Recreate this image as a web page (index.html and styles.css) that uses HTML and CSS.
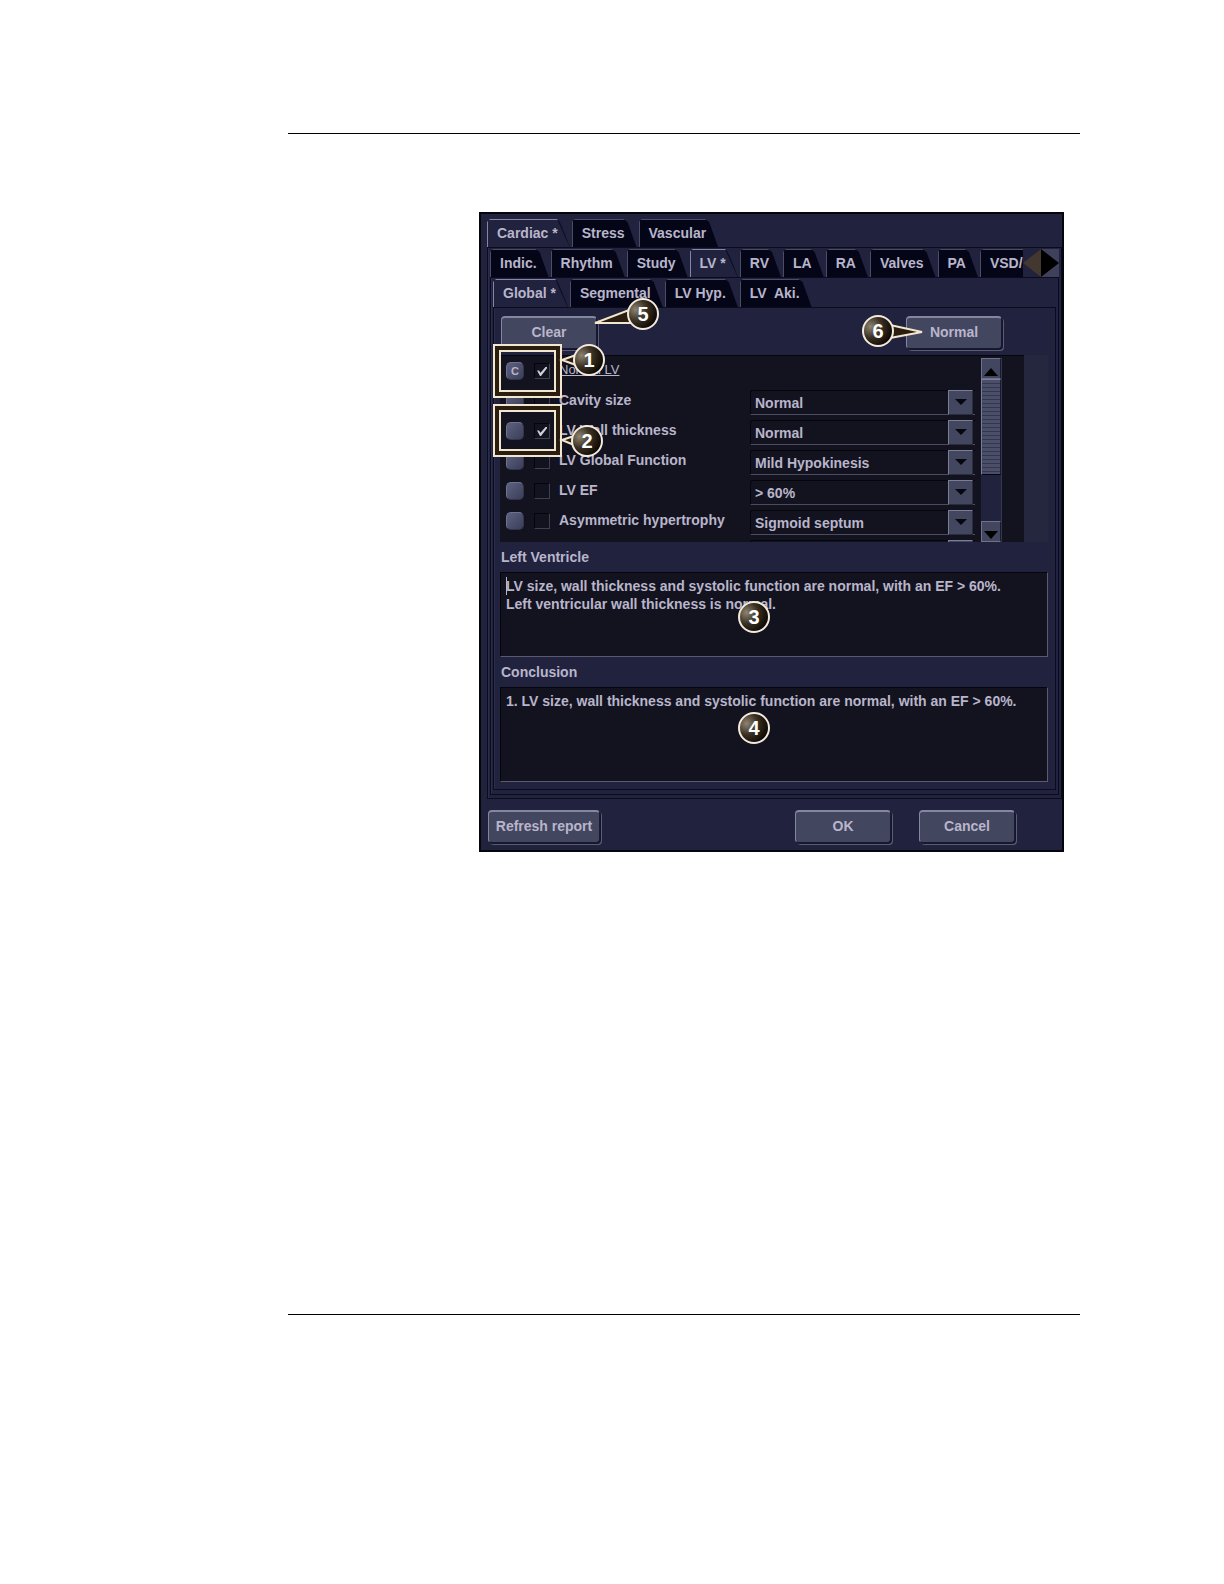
FILE: index.html
```
<!DOCTYPE html>
<html lang="en">
<head>
    <meta charset="UTF-8">
    <meta name="viewport" content="width=device-width, initial-scale=1.0">
    <title>Report Comments - LV Global</title>
    <link rel="stylesheet" href="styles.css">
</head>
<body>
    <main class="page">
        <figure class="figure">
            <div class="dialog">
                <nav class="tabs">
                    <button class="tab active">Cardiac *</button>
                    <button class="tab">Stress</button>
                    <button class="tab">Vascular</button>
                </nav>
                <div class="frame outer">
                    <div class="tab-bar">
                        <nav class="tabs">
                            <button class="tab">Indic.</button>
                            <button class="tab">Rhythm</button>
                            <button class="tab">Study</button>
                            <button class="tab active">LV *</button>
                            <button class="tab">RV</button>
                            <button class="tab">LA</button>
                            <button class="tab">RA</button>
                            <button class="tab">Valves</button>
                            <button class="tab">PA</button>
                            <button class="tab">VSD/ASD</button>
                        </nav>
                        <button class="tab-scroll prev" aria-label="Previous tabs"></button>
                        <button class="tab-scroll next" aria-label="Next tabs"></button>
                    </div>
                    <div class="frame middle">
                        <nav class="tabs">
                            <button class="tab active">Global *</button>
                            <button class="tab">Segmental</button>
                            <button class="tab">LV Hyp.</button>
                            <button class="tab">LV  Aki.</button>
                        </nav>
                        <div class="frame inner">
                            <div class="toolbar">
                                <button class="btn">Clear</button>
                                <button class="btn">Normal</button>
                            </div>

                            <div class="list-wrap">
                                <div class="list">
                                    <div class="rows">
                                        <div class="row">
                                            <button class="code">C</button>
                                            <input type="checkbox" aria-label="Normal LV" checked>
                                            <a href="#">Normal LV</a>
                                        </div>
                                        <div class="row">
                                            <button class="code" aria-label="Code"></button>
                                            <input type="checkbox" id="cavity">
                                            <label for="cavity">Cavity size</label>
                                            <div class="combo"><select aria-label="Cavity size"><option>Normal</option></select></div>
                                        </div>
                                        <div class="row">
                                            <button class="code" aria-label="Code"></button>
                                            <input type="checkbox" id="wall" checked>
                                            <label for="wall">LV Wall thickness</label>
                                            <div class="combo"><select aria-label="LV Wall thickness"><option>Normal</option></select></div>
                                        </div>
                                        <div class="row">
                                            <button class="code" aria-label="Code"></button>
                                            <input type="checkbox" id="function">
                                            <label for="function">LV Global Function</label>
                                            <div class="combo"><select aria-label="LV Global Function"><option>Mild Hypokinesis</option></select></div>
                                        </div>
                                        <div class="row">
                                            <button class="code" aria-label="Code"></button>
                                            <input type="checkbox" id="ef">
                                            <label for="ef">LV EF</label>
                                            <div class="combo"><select aria-label="LV EF"><option>&gt; 60%</option></select></div>
                                        </div>
                                        <div class="row">
                                            <button class="code" aria-label="Code"></button>
                                            <input type="checkbox" id="asym">
                                            <label for="asym">Asymmetric hypertrophy</label>
                                            <div class="combo"><select aria-label="Asymmetric hypertrophy"><option>Sigmoid septum</option></select></div>
                                        </div>
                                        <!-- next row, only its top edge shows -->
                                        <div class="row">
                                            <span></span>
                                            <span></span>
                                            <span></span>
                                            <div class="combo"><select aria-label="More"></select></div>
                                        </div>
                                    </div>
                                    <div class="scrollbar">
                                        <button class="arrow up" aria-label="Scroll up"></button>
                                        <div class="thumb"></div>
                                        <button class="arrow down" aria-label="Scroll down"></button>
                                    </div>
                                </div>
                            </div>

                            <label class="caption" for="ventricle">Left Ventricle</label>
                            <div class="text-wrap">
                                <textarea class="ventricle" id="ventricle" spellcheck="false">LV size, wall thickness and systolic function are normal, with an EF &gt; 60%.
Left ventricular wall thickness is normal.</textarea>
                                <span class="caret"></span>
                            </div>
                            <label class="caption" for="conclusion">Conclusion</label>
                            <textarea class="conclusion" id="conclusion" spellcheck="false">1. LV size, wall thickness and systolic function are normal, with an EF &gt; 60%.</textarea>
                        </div>
                    </div>
                </div>
                <footer class="actions">
                    <button class="btn refresh">Refresh report</button>
                    <button class="btn">OK</button>
                    <button class="btn">Cancel</button>
                </footer>
            </div>

            <!-- numbered callouts -->
            <svg class="callouts" width="585" height="640" viewBox="0 0 585 640">
                <defs>
                    <radialGradient id="ball" cx="0.25" cy="0.35" r="0.75">
                        <stop offset="0" stop-color="#8f8470"/>
                        <stop offset="0.5" stop-color="#3a3022"/>
                        <stop offset="1" stop-color="#0c0804"/>
                    </radialGradient>
                </defs>
                <g class="box-dark">
                    <rect x="18" y="136" width="61" height="46"/>
                    <rect x="18" y="196" width="61" height="45"/>
                </g>
                <g class="box-light">
                    <rect x="15" y="133" width="67" height="52"/>
                    <rect x="21" y="139" width="55" height="40"/>
                    <rect x="15" y="193" width="67" height="51"/>
                    <rect x="21" y="199" width="55" height="39"/>
                </g>
                <g class="pointer">
                    <path d="M83 148L97 143V153Z"/>
                    <path d="M83 228L95 224V233Z"/>
                    <path d="M116 111L150 98L154 111Z"/>
                    <path d="M443 120L411 113V126Z"/>
                </g>
                <g class="ball">
                    <circle cx="110" cy="148" r="15"/>
                    <circle cx="108" cy="229" r="15"/>
                    <circle cx="275" cy="405" r="15"/>
                    <circle cx="275" cy="516" r="15"/>
                    <circle cx="164" cy="102" r="15"/>
                    <circle cx="399" cy="119" r="15"/>
                </g>
                <g class="number">
                    <text x="110" y="155">1</text>
                    <text x="108" y="236">2</text>
                    <text x="275" y="412">3</text>
                    <text x="275" y="523">4</text>
                    <text x="164" y="109">5</text>
                    <text x="399" y="126">6</text>
                </g>
            </svg>
        </figure>
    </main>
</body>
</html>
```
FILE: styles.css
```
* {
    box-sizing: border-box;
}
body {
    margin: 0;
    background-color: #fff;
    color: #b9b5cb;
    font-family: "Liberation Sans", Arial, sans-serif;
    font-size: 14px;
    font-weight: bold;
}
button, select, textarea {
    font: inherit;
    color: inherit;
    margin: 0;
    padding: 0;
    border: none;
    border-radius: 0;
}
.page {
    margin: 133px 144px 0 288px;
    padding: 78px 16px 462px 191px;
    border-top: 1px solid #000;
    border-bottom: 1px solid #000;
}
.figure {
    position: relative;
    margin: 0;
}
.dialog {
    background-color: #20223e;
    border: 2px solid #05050c;
    padding: 5px 0 7px 6px;
}

/* tabs */
.tabs {
    display: flex;
    gap: 2px;
    overflow: hidden;
}
.tab {
    flex: none;
    height: 28px;
    padding: 0 12px 2px 9px;
    white-space: pre;
    background-color: #040618;
    border-left: 1px solid #4a4c68;
    border-top: 1px solid #4a4c68;
    clip-path: polygon(0 3px, 3px 0, calc(100% - 13px) 0, calc(100% - 9px) 3px, 100% 100%, 0 100%);
}
.tab.active {
    background: linear-gradient(to top right, #20223e 46%, #0a0b1e 50%, #20223e 56%) right / 12px 100% no-repeat #20223e;
    border-color: #8486a4;
}
.tab-bar {
    display: flex;
    height: 28px;
}
.tab-bar .tabs {
    flex: 1;
    min-width: 0;
}
.tab-scroll {
    position: relative;
    width: 18px;
    background-color: #20223e;
}
.tab-scroll::after {
    content: "";
    position: absolute;
    inset: 0;
    background-color: #000;
    clip-path: polygon(0 0, 100% 50%, 0 100%);
}
.tab-scroll.prev::after {
    background-color: #43382f;
    clip-path: polygon(100% 0, 0 50%, 100% 100%);
}
.tab-scroll.next {
    background-color: #3f415c;
}

/* nested tab pages */
.frame {
    border: 1px solid #0a0b1c;
    padding: 2px;
    box-shadow: inset 1px 0 #2b2d4c;
}
.outer {
    padding: 1px 2px 3px;
}
.middle {
    padding: 1px 2px 4px;
}
.inner {
    padding: 8px 7px 7px 6px;
}

/* buttons */
.btn {
    width: 96px;
    height: 33px;
    background-color: #43465f;
    border: 1px solid #85879f;
    border-right-color: #191a30;
    border-bottom-color: #191a30;
    border-top-width: 2px;
    border-radius: 4px;
    padding-bottom: 2px;
    box-shadow: 1px 1px 0 #14152a, 2px 2px 0 #5a5c78;
}
.toolbar {
    display: flex;
    justify-content: space-between;
    padding: 0 46px 0 1px;
    margin-bottom: 6px;
}
.actions {
    display: flex;
    gap: 28px;
    margin-top: 11px;
    padding: 0 47px 0 1px;
}
.refresh {
    width: 112px;
    margin-right: auto;
}

/* comment list */
.list-wrap {
    padding-right: 24px;
    background-color: #25273f;
}
.list {
    display: flex;
    height: 187px;
    padding: 1px 22px 0 6px;
    overflow: hidden;
    background-color: #12131f;
    border-top: 1px solid #05050f;
}
.rows {
    flex: 1;
}
.row {
    display: grid;
    grid-template-columns: 28px 25px 1fr 225px;
    align-items: start;
    height: 30px;
    padding-top: 4px;
}
.row label, .row a {
    line-height: 18px;
}
.row a {
    color: inherit;
    font-size: 13px;
    font-weight: normal;
}
.code {
    width: 18px;
    height: 18px;
    margin-top: 1px;
    background: linear-gradient(135deg, #5d6180, #3b3e58);
    border: 1px solid #6f728e;
    border-right-color: #33354c;
    border-bottom-color: #33354c;
    border-radius: 5px;
    font-size: 11px;
    line-height: 16px;
}
input[type="checkbox"] {
    appearance: none;
    width: 16px;
    height: 16px;
    margin: 2px 0 0;
    background-color: #12131f;
    border: 1px solid #04040a;
    border-right-color: #3e3f54;
    border-bottom-color: #3e3f54;
}
input[type="checkbox"]:checked::before {
    content: "";
    display: block;
    width: 10px;
    height: 9px;
    margin: 3px 2px;
    background-color: #d0ccdc;
    clip-path: polygon(0 40%, 20% 40%, 35% 65%, 85% 0, 100% 0, 100% 15%, 40% 100%, 30% 100%);
}
.combo {
    position: relative;
    height: 25px;
    margin-top: -1px;
}
.combo select {
    appearance: none;
    display: block;
    width: 100%;
    height: 25px;
    padding: 0 26px 0 4px;
    background-color: #12131f;
    border: 1px solid #05050c;
    border-right: none;
    border-bottom-color: #4b4c62;
    border-radius: 3px 0 0 0;
}
.combo::before {
    content: "";
    position: absolute;
    top: 0;
    right: 2px;
    width: 23px;
    height: 23px;
    background-color: #43465f;
    border: 1px solid #7b7d98;
    border-right-color: #2a2c42;
    border-bottom-color: #2a2c42;
    pointer-events: none;
}
.combo::after {
    content: "";
    position: absolute;
    top: 9px;
    right: 8px;
    border: 6px solid transparent;
    border-top-color: #06060f;
    border-bottom: none;
    pointer-events: none;
}
.scrollbar {
    display: flex;
    flex-direction: column;
    width: 21px;
    margin: 1px 0 0 6px;
    background-color: #20223e;
    border-right: 1px solid #34364e;
}
.arrow {
    height: 21px;
    padding: 7px 2px 0;
    background-color: #43465f;
    border: 1px solid #6f718c;
    border-right-color: #191a30;
}
.arrow::after {
    content: "";
    display: block;
    height: 8px;
    background-color: #000;
    clip-path: polygon(50% 0, 100% 100%, 0 100%);
}
.arrow.down::after {
    clip-path: polygon(0 0, 100% 0, 50% 100%);
}
.thumb {
    height: 96px;
    margin-bottom: auto;
    background: repeating-linear-gradient(#4b4e68 0 3px, #34364e 3px 4px);
    border: 1px solid #7b7d98;
    border-right-color: #191a30;
    border-bottom-color: #05050c;
}

/* report text */
.caption {
    display: block;
    padding-left: 1px;
    line-height: 30px;
}
.text-wrap {
    position: relative;
}
textarea {
    display: block;
    width: 100%;
    padding: 4px 5px;
    line-height: 18px;
    resize: none;
    overflow: hidden;
    background-color: #12131f;
    border: 1px solid #05050f;
    border-right-color: #5a5b73;
    border-bottom-color: #5a5b73;
}
.ventricle {
    height: 85px;
}
.conclusion {
    height: 95px;
}
.caret {
    position: absolute;
    top: 5px;
    left: 6px;
    width: 1px;
    height: 18px;
    background-color: #b9b5cb;
}

/* callouts lie over the dialog */
.callouts {
    position: absolute;
    top: 0;
    left: 0;
    pointer-events: none;
}
.box-dark {
    fill: none;
    stroke: #2a1e10;
    stroke-width: 5px;
}
.box-light {
    fill: none;
    stroke: #f3e6cf;
    stroke-width: 2px;
}
.pointer {
    fill: #2a1e10;
    stroke: #f3e6cf;
    stroke-width: 2px;
}
.ball {
    fill: url(#ball);
    stroke: #f3e9dc;
    stroke-width: 2px;
}
.number {
    fill: #fff;
    font-size: 20px;
    text-anchor: middle;
}
```
